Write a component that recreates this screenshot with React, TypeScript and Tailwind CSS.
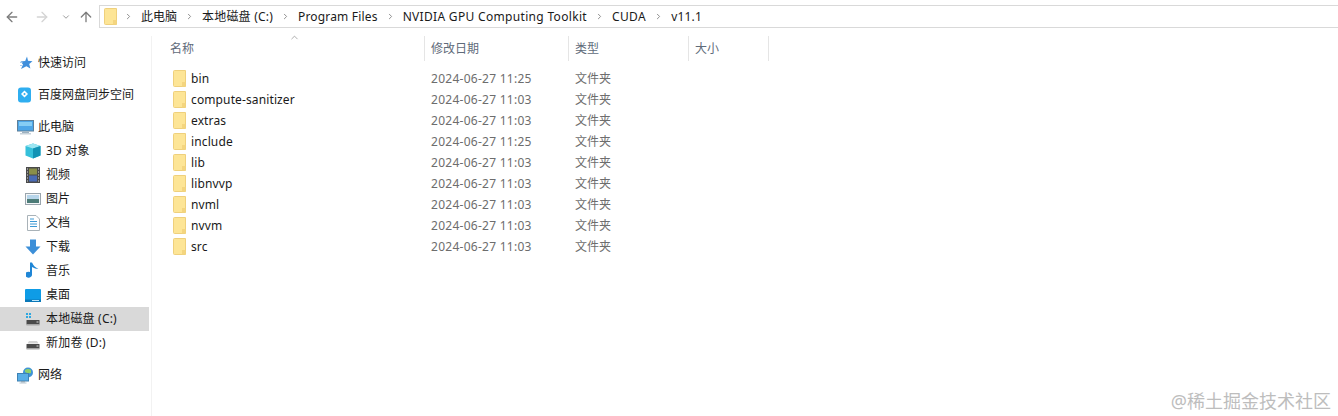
import { ArrowLeft, ArrowRight, ArrowUp, ChevronDown, ChevronRight, ChevronUp } from 'lucide-react';
import type { ReactNode } from 'react';

const FONT = 'font-["Noto_Sans","Noto_Sans_CJK_SC",sans-serif]';

const files = [
  { name: 'bin', date: '2024-06-27 11:25' },
  { name: 'compute-sanitizer', date: '2024-06-27 11:03' },
  { name: 'extras', date: '2024-06-27 11:03' },
  { name: 'include', date: '2024-06-27 11:25' },
  { name: 'lib', date: '2024-06-27 11:03' },
  { name: 'libnvvp', date: '2024-06-27 11:03' },
  { name: 'nvml', date: '2024-06-27 11:03' },
  { name: 'nvvm', date: '2024-06-27 11:03' },
  { name: 'src', date: '2024-06-27 11:03' },
];

const crumbs = [
  { label: '此电脑', spacing: '' },
  { label: '本地磁盘 (C:)', spacing: 'tracking-[0.2px]' },
  { label: 'Program Files', spacing: 'tracking-[0.18px]' },
  { label: 'NVIDIA GPU Computing Toolkit', spacing: 'tracking-[0.32px]' },
  { label: 'CUDA', spacing: 'tracking-[0.4px]' },
  { label: 'v11.1', spacing: 'tracking-[0.2px]' },
];

function FolderIcon() {
  return (
    <svg width="14" height="17" viewBox="0 0 14 17" className="shrink-0">
      <path d="M1.5 1.5 Q1.5 0.5 2.5 0.5 H13.5 V16.5 H2.5 Q1.5 16.5 1.5 15.5 Z" fill="#fde596" stroke="#efd07c" />
      <rect x="10" y="12" width="3.5" height="4.5" fill="#f4d57f" />
    </svg>
  );
}

function Star() {
  return (
    <svg width="16" height="16" viewBox="0 0 16 16">
      <path d="M10 1.5 11 5.8 15.5 6.2 12.2 9 13.4 13.5 9.4 11.2 4 14 6 9.4 3.6 6.6 8.2 6Z" fill="#3f8fdc" />
      <path d="M3 7.5h2.5M3 10.5h2.5" stroke="#a8cdee" />
    </svg>
  );
}

function BaiduIcon() {
  return (
    <svg width="16" height="16" viewBox="0 0 16 16">
      <rect x="1" y="0.5" width="13" height="15" rx="3" fill="#2faef0" />
      <path d="M7.5 3.5 11 7 7.5 10.5 4 7Z" fill="#fff" />
      <path d="M6.2 7 7.5 5.7 8.8 7 7.5 8.3Z" fill="#2faef0" />
    </svg>
  );
}

function Monitor() {
  return (
    <svg width="17" height="15" viewBox="0 0 17 15">
      <rect x="0.5" y="0.5" width="16" height="10.5" fill="#4ea6e8" stroke="#5d7f99" />
      <rect x="2" y="2" width="13" height="4" fill="#86cdf5" />
      <rect x="5" y="11.5" width="7" height="1.5" fill="#9db1c0" />
      <rect x="3" y="13" width="11" height="1.5" fill="#c7d2da" />
    </svg>
  );
}

function Cube() {
  return (
    <svg width="16" height="16" viewBox="0 0 16 16">
      <path d="M8 0.5 15.5 3 15.5 12.5 8 15.5 0.5 12.5 0.5 3Z" fill="#35c0da" />
      <path d="M8 0.5 15.5 3 8 5.5 0.5 3Z" fill="#9de6f2" />
      <path d="M8 5.5 15.5 3 15.5 12.5 8 15.5Z" fill="#1292b4" />
    </svg>
  );
}

function Film() {
  return (
    <svg width="14" height="16" viewBox="0 0 14 16" className="ml-[1px]">
      <rect x="0" y="0" width="14" height="16" fill="#4a4a4a" />
      <rect x="3" y="1.5" width="8" height="6" fill="#8a8f4a" />
      <rect x="3" y="8.5" width="8" height="6" fill="#4a6bb5" />
      <path d="M1 2h1M1 5h1M1 8h1M1 11h1M1 14h1M12 2h1M12 5h1M12 8h1M12 11h1M12 14h1" stroke="#ddd" />
    </svg>
  );
}

function Picture() {
  return (
    <svg width="16" height="12" viewBox="0 0 16 12">
      <rect x="0.5" y="0.5" width="15" height="11" fill="#f4f6f8" stroke="#9aa5ad" />
      <rect x="2" y="2" width="12" height="4" fill="#b7d5ea" />
      <rect x="2" y="6" width="12" height="4" fill="#4d7c78" />
    </svg>
  );
}

function Doc() {
  return (
    <svg width="13" height="16" viewBox="0 0 13 16" className="ml-[2px]">
      <path d="M0.5 0.5H9L12.5 4V15.5H0.5Z" fill="#fff" stroke="#a9b2b8" />
      <path d="M3 4h4M3 6.5h7M3 9h7M3 11.5h7" stroke="#3d9ad6" />
    </svg>
  );
}

function Download() {
  return (
    <svg width="16" height="16" viewBox="0 0 16 16">
      <path d="M5 0.5H11V7.5H15.5L8 15.5 0.5 7.5H5Z" fill="#3c8fd8" />
    </svg>
  );
}

function Music() {
  return (
    <svg width="14" height="18" viewBox="0 0 14 18" className="ml-[1px]">
      <path d="M6 0.5 V12.5 A3.5 3 0 1 1 4 10 V0.5Z" fill="#1f86d6" />
      <path d="M6 0.5 Q8 5 12.5 7 Q9 6.8 6 5Z" fill="#1f86d6" />
    </svg>
  );
}

function Desktop() {
  return (
    <svg width="16" height="13" viewBox="0 0 16 13">
      <rect x="0" y="0" width="16" height="13" rx="1" fill="#0e9ce6" />
      <rect x="0" y="10.5" width="16" height="2.5" fill="#0a78b8" />
      <rect x="7" y="11" width="7" height="1" fill="#bfe6fa" />
    </svg>
  );
}

function Drive({ system }: { system?: boolean }) {
  return (
    <svg width="16" height="14" viewBox="0 0 16 14">
      {system && <path d="M1 1h2v2H1zM4 1h2v2H4zM1 4h2v2H1zM4 4h2v2H4z" fill="#2fa8e0" />}
      {!system && <path d="M2.5 7.5 4 5H12L13.5 7.5Z" fill="#d4d4d4" />}
      <rect x="1.5" y="8" width="13" height="4.5" rx="0.5" fill="#4a4a4a" />
      <rect x="1.5" y="12" width="13" height="1.5" fill="#a5a5a5" />
      <rect x="11.5" y="9.5" width="2" height="1" fill="#d8d8d8" />
    </svg>
  );
}

function Network() {
  return (
    <svg width="17" height="17" viewBox="0 0 17 17">
      <circle cx="11" cy="5.5" r="5" fill="#3f94d6" />
      <path d="M8 3q3-2 6 0v3q-3 1-6-1Z" fill="#8fd06a" />
      <rect x="0.5" y="6.5" width="11" height="7.5" fill="#58aee6" stroke="#3e82b4" />
      <rect x="4" y="14" width="4" height="1.5" fill="#8fa6b6" />
      <rect x="2.5" y="15.5" width="7" height="1" fill="#b8c6d0" />
    </svg>
  );
}

function NavRow({ icon, label, indent, selected, wide, className = '' }: { icon: ReactNode; label: string; indent?: boolean; selected?: boolean; wide?: boolean; className?: string }) {
  return (
    <div className={`flex h-6 items-center ${selected ? 'bg-[#d9d9d9]' : ''} ${indent ? 'pl-[25px]' : 'pl-[17px]'} ${className}`}>
      <span className="flex w-[21px] shrink-0 items-center justify-start">{icon}</span>
      <span className={`whitespace-nowrap ${wide ? 'tracking-[0.2px]' : ''}`}>{label}</span>
    </div>
  );
}

function HeaderCell({ label, width }: { label: string; width: string }) {
  return (
    <div className={`flex h-[25px] shrink-0 items-center border-r border-[#e5e5e5] pl-[6px] ${width}`}>{label}</div>
  );
}

export default function App() {
  return (
    <div className={`relative flex h-[416px] w-[1338px] flex-col overflow-hidden bg-white text-xs text-[#1a1a1a] ${FONT}`}>
      {/* Toolbar */}
      <div className="flex h-[36px] shrink-0 items-start pt-[5px]">
        <div className="flex h-[23px] w-[99px] shrink-0 items-center">
          <ArrowLeft size={16} strokeWidth={2} className="ml-[4px] text-[#7d7d7d]" />
          <ArrowRight size={16} strokeWidth={2} className="ml-[14px] text-[#d4d4d4]" />
          <ChevronDown size={10} strokeWidth={2} className="ml-[11px] text-[#8a8a8a]" />
          <ArrowUp size={16} strokeWidth={2} className="ml-[7px] text-[#7d7d7d]" />
        </div>
        <div className="flex h-[23px] flex-1 items-center border border-r-0 border-[#d9d9d9] pl-[3px]">
          <FolderIcon />
          <div className="-ml-[1px] flex items-center whitespace-nowrap">
            {crumbs.map((crumb) => (
              <div key={crumb.label} className="flex items-center">
                <ChevronRight size={9} strokeWidth={2.5} className="mx-[8px] text-[#8a8a8a]" />
                <span className={crumb.spacing}>{crumb.label}</span>
              </div>
            ))}
          </div>
        </div>
      </div>

      <div className="flex min-h-0 flex-1">
        {/* Sidebar */}
        <div className="w-[152px] shrink-0 border-r border-[#f2f2f2] pr-[2px] pt-[15px]">
          <NavRow icon={<Star />} label="快速访问" />
          <NavRow icon={<BaiduIcon />} label="百度网盘同步空间" className="mt-2" />
          <NavRow icon={<Monitor />} label="此电脑" className="mt-2" />
          <NavRow icon={<Cube />} label="3D 对象" indent wide />
          <NavRow icon={<Film />} label="视频" indent />
          <NavRow icon={<Picture />} label="图片" indent />
          <NavRow icon={<Doc />} label="文档" indent />
          <NavRow icon={<Download />} label="下载" indent />
          <NavRow icon={<Music />} label="音乐" indent />
          <NavRow icon={<Desktop />} label="桌面" indent />
          <NavRow icon={<Drive system />} label="本地磁盘 (C:)" indent selected wide />
          <NavRow icon={<Drive />} label="新加卷 (D:)" indent wide />
          <NavRow icon={<Network />} label="网络" className="mt-2" />
        </div>

        {/* File list */}
        <div className="relative flex-1">
          <div className="flex text-[#5f6b7a]">
            <HeaderCell label="名称" width="ml-[12px] w-[261px]" />
            <HeaderCell label="修改日期" width="w-[144px]" />
            <HeaderCell label="类型" width="w-[120px]" />
            <HeaderCell label="大小" width="w-[80px]" />
          </div>
          <ChevronUp size={11} strokeWidth={1.5} className="absolute left-[137px] top-[-4px] text-[#8a8a8a]" />
          <div className="pt-[7px]">
            {files.map((file) => (
              <div key={file.name} className="flex h-[21px] items-center">
                <div className="flex w-[279px] shrink-0 items-center pl-[20px]">
                  <FolderIcon />
                  <span className="ml-[5px] tracking-[0.12px]">{file.name}</span>
                </div>
                <div className="w-[144px] shrink-0 tracking-[0.27px] text-[#6d6d6d]">{file.date}</div>
                <div className="text-[#6d6d6d]">文件夹</div>
              </div>
            ))}
          </div>
        </div>
      </div>

      {/* Watermark */}
      <div className="absolute bottom-[3px] right-[7px] text-[18px] leading-[24px] text-[#bdbdbd]">@稀土掘金技术社区</div>
    </div>
  );
}
